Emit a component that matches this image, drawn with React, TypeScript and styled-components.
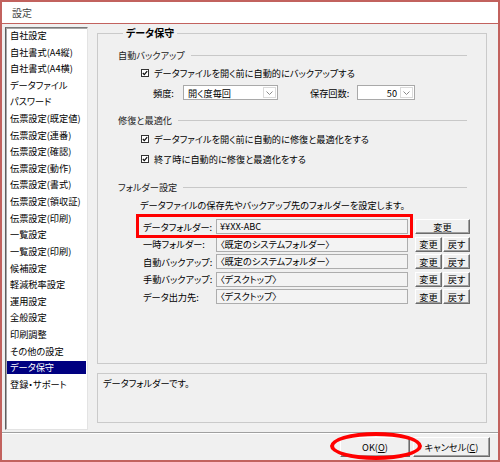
import React from "react";
import styled, { createGlobalStyle } from "styled-components";

const GlobalStyle = createGlobalStyle`
  html, body {
    margin: 0;
    padding: 0;
    background: #f0f0f0;
  }
  body {
    font-family: "Noto Sans CJK JP", "Noto Sans", sans-serif;
    font-size: 9.2px;
    font-feature-settings: "palt";
    color: #000;
  }
`;

const menuItems = [
  "自社設定",
  "自社書式(A4縦)",
  "自社書式(A4横)",
  "データファイル",
  "パスワード",
  "伝票設定(既定値)",
  "伝票設定(連番)",
  "伝票設定(確認)",
  "伝票設定(動作)",
  "伝票設定(書式)",
  "伝票設定(領収証)",
  "伝票設定(印刷)",
  "一覧設定",
  "一覧設定(印刷)",
  "候補設定",
  "軽減税率設定",
  "運用設定",
  "全般設定",
  "印刷調整",
  "その他の設定",
  "データ保守",
  "登録・サポート",
];

const folders = [
  { label: "一時フォルダー:", value: "〈既定のシステムフォルダー〉" },
  { label: "自動バックアップ:", value: "〈既定のシステムフォルダー〉" },
  { label: "手動バックアップ:", value: "〈デスクトップ〉" },
  { label: "データ出力先:", value: "〈デスクトップ〉" },
];

const Chevron = () => (
  <svg width="7" height="4" viewBox="0 0 7 4">
    <polyline points="0.5,0.5 3.5,3.5 6.5,0.5" fill="none" stroke="#8a8a8a" strokeWidth="1" />
  </svg>
);

const CheckIcon = () => (
  <svg width="8" height="8" viewBox="0 0 8 8">
    <rect x="0.5" y="0.5" width="7" height="7" fill="#fff" stroke="#333" />
    <polyline points="1.8,4 3.3,5.6 6.2,2.2" fill="none" stroke="#111" strokeWidth="1.3" />
  </svg>
);

const App = () => {
  return (
    <>
      <GlobalStyle />
      <Window>
        <TitleBar>設定</TitleBar>
        <Main>
          <MenuList>
            {menuItems.map((item) => (
              <MenuItem key={item} $selected={item === "データ保守"}>
                {item}
              </MenuItem>
            ))}
          </MenuList>
          <RightColumn>
            <Group>
              <Legend>データ保守</Legend>

              <SectionHeader $top={9}>
                <span>自動バックアップ</span>
                <Rule />
              </SectionHeader>
              <CheckRow $top={4}>
                <CheckIcon />
                <span>データファイルを開く前に自動的にバックアップする</span>
              </CheckRow>
              <FreqRow>
                <FieldLabel $width={30}>頻度:</FieldLabel>
                <Combo $width={95}>
                  <ComboText>開く度毎回</ComboText>
                  <ComboArrow>
                    <Chevron />
                  </ComboArrow>
                </Combo>
                <FieldLabel $width={47} $gap={32}>
                  保存回数:
                </FieldLabel>
                <Combo $width={58}>
                  <ComboText $right>50</ComboText>
                  <ComboArrow>
                    <Chevron />
                  </ComboArrow>
                </Combo>
              </FreqRow>

              <SectionHeader $top={13}>
                <span>修復と最適化</span>
                <Rule />
              </SectionHeader>
              <CheckRow $top={5}>
                <CheckIcon />
                <span>データファイルを開く前に自動的に修復と最適化をする</span>
              </CheckRow>
              <CheckRow $top={6}>
                <CheckIcon />
                <span>終了時に自動的に修復と最適化をする</span>
              </CheckRow>

              <SectionHeader $top={14}>
                <span>フォルダー設定</span>
                <Rule />
              </SectionHeader>
              <FolderNote>データファイルの保存先やバックアップ先のフォルダーを設定します。</FolderNote>

              <FolderRow $top={7}>
                <Marked>
                  <FolderLabel>データフォルダー:</FolderLabel>
                  <PathBox>¥¥XX-ABC</PathBox>
                  <RedFrame />
                </Marked>
                <ButtonGroup>
                  <SmallButton $width={55}>変更</SmallButton>
                </ButtonGroup>
              </FolderRow>
              {folders.map((f) => (
                <FolderRow key={f.label} $top={2.5}>
                  <FolderLabel>{f.label}</FolderLabel>
                  <PathBox>{f.value}</PathBox>
                  <ButtonGroup>
                    <SmallButton $width={27}>変更</SmallButton>
                    <SmallButton $width={27}>戻す</SmallButton>
                  </ButtonGroup>
                </FolderRow>
              ))}
            </Group>
            <InfoBox>データフォルダーです。</InfoBox>
          </RightColumn>
        </Main>
        <Separator />
        <Footer>
          <Circled>
            <DialogButton $width={70}>
              OK(<u>O</u>)
            </DialogButton>
            <RedEllipse />
          </Circled>
          <DialogButton $width={77}>
            キャンセル(<u>C</u>)
          </DialogButton>
        </Footer>
      </Window>
    </>
  );
};

const Window = styled.div`
  width: 500px;
  height: 462px;
  box-sizing: border-box;
  border: 2px solid #c2625e;
  background: #f0f0f0;
  display: flex;
  flex-direction: column;
  overflow: hidden;
`;

const TitleBar = styled.div`
  height: 21px;
  flex: none;
  background: #fff;
  border-bottom: 1px solid #c2625e;
  display: flex;
  align-items: center;
  padding-left: 10px;
  font-size: 10px;
  color: #444;
`;

const Main = styled.div`
  display: flex;
  gap: 9px;
  padding: 3px 11px 0 3px;
  height: 403px;
  flex: none;
`;

const MenuList = styled.div`
  width: 83px;
  height: 403px;
  box-sizing: border-box;
  background: #fff;
  border: 1px solid;
  border-color: #7a7a7a #e3e3e3 #e3e3e3 #5e5e5e;
  box-shadow: inset 1px 1px 0 #a8a8a8;
  padding: 1px 1px 0 1px;
  display: flex;
  flex-direction: column;
`;

const MenuItem = styled.div<{ $selected?: boolean }>`
  height: 13px;
  margin-bottom: 3.62px;
  line-height: 13px;
  padding-left: 3px;
  white-space: nowrap;
  background: ${(p) => (p.$selected ? "#000080" : "transparent")};
  color: ${(p) => (p.$selected ? "#fff" : "#000")};
`;

const RightColumn = styled.div`
  flex: 1;
  display: flex;
  flex-direction: column;
  gap: 9px;
`;

const Group = styled.fieldset`
  margin: 0;
  height: 337px;
  box-sizing: border-box;
  border: 1px solid #cacaca;
  padding: 0 16px 0 20px;
  min-width: 0;
  display: flex;
  flex-direction: column;
`;

const Legend = styled.legend`
  margin-left: 5px;
  padding: 0 3px;
  line-height: 12px;
  height: 12px;
  font-weight: bold;
  font-size: 10px;
`;

const SectionHeader = styled.div<{ $top: number }>`
  margin-top: ${(p) => p.$top}px;
  height: 14px;
  display: flex;
  align-items: center;
  gap: 6px;
  color: #222;
`;

const Rule = styled.div`
  flex: 1;
  height: 1px;
  margin-right: 3px;
  background: #c8c8c8;
`;

const CheckRow = styled.div<{ $top: number }>`
  margin-top: ${(p) => p.$top}px;
  margin-left: 23px;
  height: 14px;
  display: flex;
  align-items: center;
  gap: 5px;
  white-space: nowrap;
`;

const FreqRow = styled.div`
  margin-top: 5px;
  margin-left: 35px;
  height: 15px;
  display: flex;
  align-items: center;
`;

const FieldLabel = styled.span<{ $width: number; $gap?: number }>`
  width: ${(p) => p.$width}px;
  margin-left: ${(p) => p.$gap ?? 0}px;
  flex: none;
  white-space: nowrap;
`;

const Combo = styled.div<{ $width: number }>`
  width: ${(p) => p.$width}px;
  height: 15px;
  box-sizing: border-box;
  flex: none;
  background: #fff;
  border: 1px solid #a9a9a9;
  display: flex;
  align-items: center;
`;

const ComboText = styled.span<{ $right?: boolean }>`
  flex: 1;
  padding: 0 3px 0 4px;
  text-align: ${(p) => (p.$right ? "right" : "left")};
  white-space: nowrap;
`;

const ComboArrow = styled.span`
  width: 13px;
  height: 11px;
  margin-right: 1px;
  box-sizing: border-box;
  border: 1px solid #dadada;
  display: flex;
  align-items: center;
  justify-content: center;
`;

const FolderNote = styled.div`
  margin-top: 4px;
  margin-left: 22px;
  height: 14px;
  line-height: 14px;
  white-space: nowrap;
`;

const FolderRow = styled.div<{ $top: number }>`
  margin-top: ${(p) => p.$top}px;
  margin-left: 25px;
  height: 15px;
  display: flex;
  align-items: center;
`;

const Marked = styled.div`
  position: relative;
  display: flex;
  align-items: center;
  height: 15px;
`;

const RedFrame = styled.div`
  position: absolute;
  top: -5px;
  bottom: -4px;
  left: -7px;
  right: -5px;
  border: 3px solid #f00;
  pointer-events: none;
`;

const FolderLabel = styled.span`
  width: 73px;
  flex: none;
  white-space: nowrap;
`;

const PathBox = styled.div`
  width: 192px;
  height: 15px;
  box-sizing: border-box;
  flex: none;
  background: #f3f3f3;
  border: 1px solid #adadad;
  padding-left: 3px;
  line-height: 13px;
  white-space: nowrap;
  overflow: hidden;
`;

const ButtonGroup = styled.div`
  display: flex;
  gap: 1px;
  margin-left: 7px;
`;

const SmallButton = styled.button<{ $width: number }>`
  width: ${(p) => p.$width}px;
  height: 15px;
  box-sizing: border-box;
  padding: 0;
  margin: 0;
  font: inherit;
  color: #000;
  background: #f0f0f0;
  border: 1px solid;
  border-color: #fff #6b6b6b #6b6b6b #fff;
  box-shadow: inset -1px -1px 0 #a0a0a0;
  line-height: 12px;
`;

const InfoBox = styled.div`
  height: 50px;
  box-sizing: border-box;
  border: 1px solid #cacaca;
  padding: 2px 5px;
  line-height: 14px;
`;

const Separator = styled.div`
  margin-top: 2px;
  height: 0;
  border-top: 1px solid #a0a0a0;
  border-bottom: 1px solid #fff;
`;

const Footer = styled.div`
  display: flex;
  justify-content: flex-end;
  gap: 3px;
  padding: 3px 8px 0 0;
`;

const Circled = styled.div`
  position: relative;
  display: flex;
`;

const RedEllipse = styled.div`
  position: absolute;
  top: -5px;
  bottom: -3px;
  left: -10px;
  right: -12px;
  border: 4px solid #f00;
  border-radius: 50%;
  pointer-events: none;
`;

const DialogButton = styled.button<{ $width: number }>`
  width: ${(p) => p.$width}px;
  height: 20px;
  box-sizing: border-box;
  padding: 0;
  margin: 0;
  font: inherit;
  color: #000;
  background: #f0f0f0;
  border: 1px solid;
  border-color: #fff #6b6b6b #6b6b6b #fff;
  box-shadow: inset -1px -1px 0 #a0a0a0;

  u {
    text-decoration: underline;
  }
`;

export default App;
